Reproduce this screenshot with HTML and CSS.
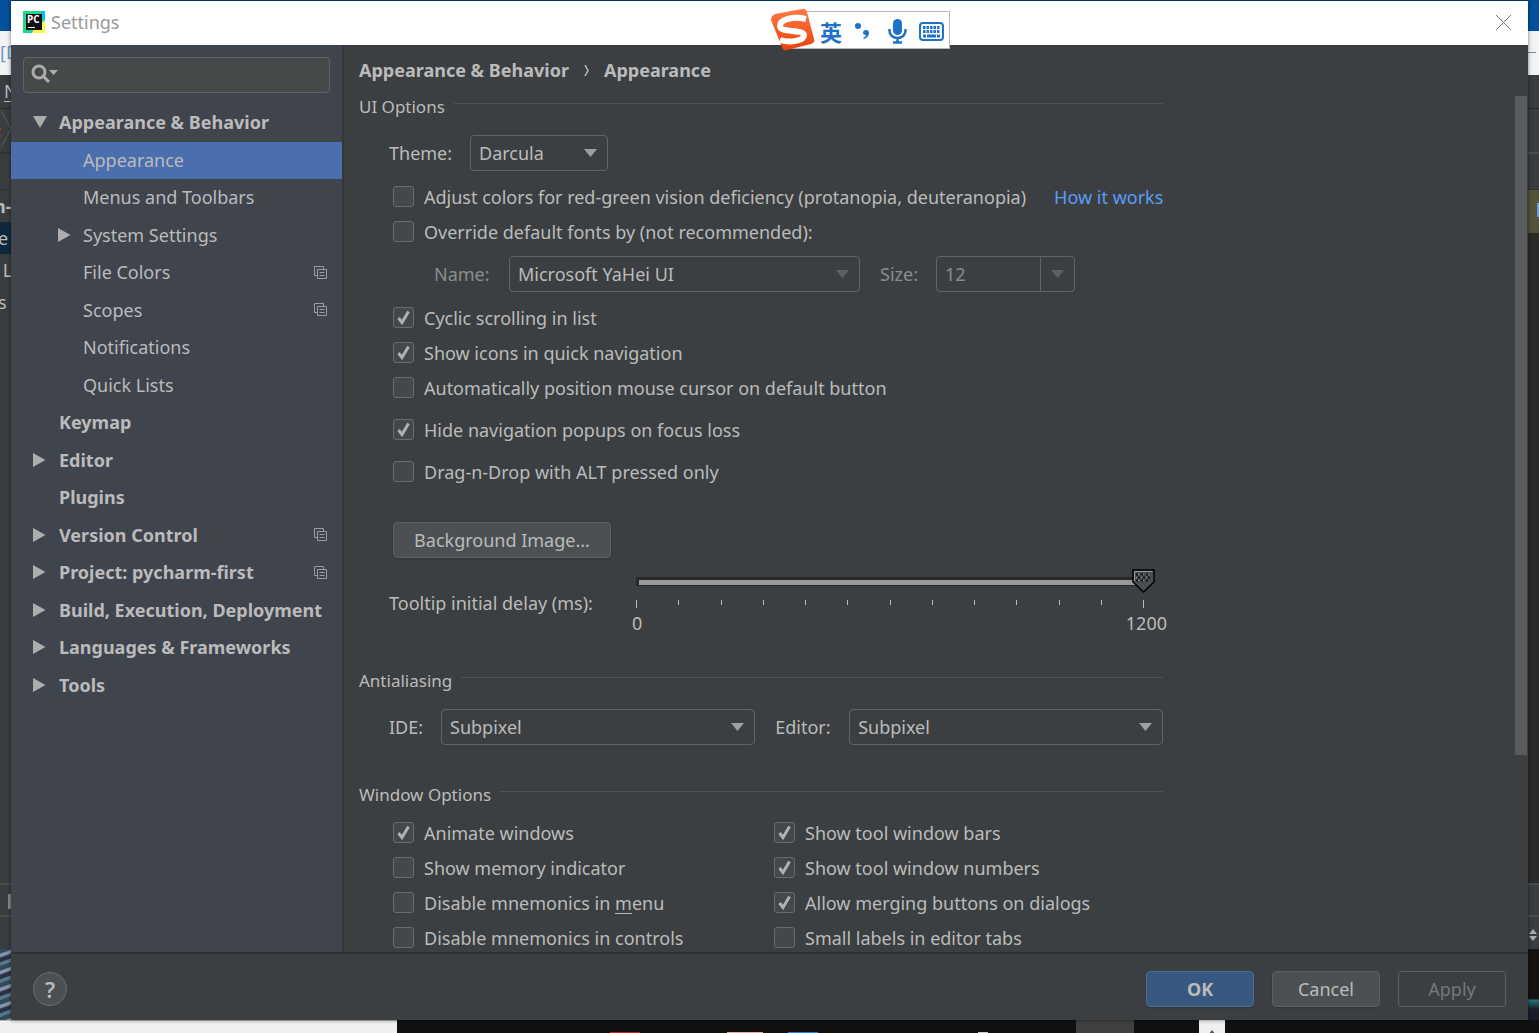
FILE: index.html
```html
<!DOCTYPE html>
<html lang="en">
<head>
<meta charset="utf-8">
<title>Settings</title>
<link rel="stylesheet" href="styles.css">
</head>
<body>
<svg width="0" height="0" class="defs" aria-hidden="true">
  <symbol id="copy" viewBox="0 0 13 13"><path d="M3 9.500H.5V.5h9V3M3.500 3.500h9v9h-9zM5.500 6.500h5M5.500 9.500h5" fill="none" stroke="#9a9ca1"/></symbol>
  <symbol id="right" viewBox="0 0 13 14"><path d="M0 0 12.500 7 0 14z" fill="#adadad"/></symbol>
  <symbol id="down" viewBox="0 0 14 12"><path d="M0 0h14L7 12z" fill="#adadad"/></symbol>
</svg>

<div class="desktop" aria-hidden="true">
  <div class="strip">
    <div class="sky"></div>
    <div class="caption"><span class="blue">[D</span></div>
    <div class="menu"><u>N</u></div>
    <div class="crumb"><svg width="11" height="44" viewBox="0 0 11 44"><path d="M1 2 11 20 1 38" fill="none" stroke="#5a5d5f"/><path d="M0 20h1M0 27h1" stroke="#a33" stroke-width="2"/></svg></div>
    <div class="tools"></div>
    <div class="tree-back"><b>n-</b><span class="picked">e</span><span>&nbsp;L</span><span>s</span></div>
    <div class="tab"><i></i></div>
    <div class="status"></div>
    <div class="photo"></div>
  </div>
  <div class="strip right">
    <div class="sky"></div>
    <div class="caption"><i></i></div>
    <div class="menu"></div>
    <div class="crumb"></div>
    <div class="tools"></div>
    <div class="note"><i></i></div>
    <div class="editor"></div>
    <div class="tab"></div>
    <div class="status"><svg width="9" height="12" viewBox="0 0 9 12"><path d="M0 5l4-5 4 5zM0 7h8l-4 5z" fill="#aaa"/></svg></div>
    <div class="photo dark"></div>
  </div>
  <div class="taskbar"><div class="light"></div><div class="icons"><i class="red"></i><i class="pink"></i><i class="azure"></i><i class="white"></i></div><div class="active"></div><div class="gap"></div><div class="tray"><svg width="8" height="5" viewBox="0 0 8 5"><path d="M4 0 8 5H0z" fill="#555"/></svg></div></div>
</div>

<div class="dialog" role="dialog" aria-labelledby="title">
  <header class="titlebar">
    <svg width="22" height="22" viewBox="0 0 22 22" aria-hidden="true"><path fill="#21d789" d="M0 0h22v22H0z"/><path fill="#07c3f2" d="M18 0h4v12l-4-2z"/><path fill="#fcf84a" d="m18 12 4-3v13H9l3-6z"/><path fill="#111" d="M3 3h16v16H3z"/><path fill="#fff" d="M5 16h7v1H5z"/><text x="4" y="12" class="logo">PC</text></svg>
    <h1 id="title">Settings</h1>
    <button class="close" type="button" aria-label="Close"><svg width="15" height="15" viewBox="0 0 15 15"><path d="m0 0 15 15M15 0 0 15" stroke="#777" fill="none"/></svg></button>
  </header>

  <div class="body">
    <aside class="sidebar">
      <label class="search"><svg width="27" height="19" viewBox="0 0 27 19" aria-hidden="true"><circle cx="8" cy="8" r="6" fill="none" stroke="#adadad" stroke-width="3"/><path d="m12 12 6 6" stroke="#adadad" stroke-width="3"/><path d="M18 6h9l-4.500 5z" fill="#adadad"/></svg><input type="search" aria-label="Search settings"></label>
      <nav class="tree">
        <a href="#" class="top"><svg width="14" height="12"><use href="#down"/></svg><span>Appearance &amp; Behavior</span></a>
        <a href="#" class="sub selected"><span>Appearance</span></a>
        <a href="#" class="sub"><span>Menus and Toolbars</span></a>
        <a href="#" class="sub"><svg width="13" height="14"><use href="#right"/></svg><span>System Settings</span></a>
        <a href="#" class="sub"><span>File Colors</span><svg class="copy"><use href="#copy"/></svg></a>
        <a href="#" class="sub"><span>Scopes</span><svg class="copy"><use href="#copy"/></svg></a>
        <a href="#" class="sub"><span>Notifications</span></a>
        <a href="#" class="sub"><span>Quick Lists</span></a>
        <a href="#" class="top"><span>Keymap</span></a>
        <a href="#" class="top"><svg width="13" height="14"><use href="#right"/></svg><span>Editor</span></a>
        <a href="#" class="top"><span>Plugins</span></a>
        <a href="#" class="top"><svg width="13" height="14"><use href="#right"/></svg><span>Version Control</span><svg class="copy"><use href="#copy"/></svg></a>
        <a href="#" class="top"><svg width="13" height="14"><use href="#right"/></svg><span>Project: pycharm-first</span><svg class="copy"><use href="#copy"/></svg></a>
        <a href="#" class="top"><svg width="13" height="14"><use href="#right"/></svg><span>Build, Execution, Deployment</span></a>
        <a href="#" class="top"><svg width="13" height="14"><use href="#right"/></svg><span>Languages &amp; Frameworks</span></a>
        <a href="#" class="top"><svg width="13" height="14"><use href="#right"/></svg><span>Tools</span></a>
      </nav>
    </aside>

    <main class="main">
      <div class="crumbs"><b>Appearance &amp; Behavior</b><svg width="5" height="11" viewBox="0 0 5 11" aria-hidden="true"><path d="m1 0 3 5.500L1 11" fill="none" stroke="#bbb" stroke-width="1.500"/></svg><b>Appearance</b></div>
      <div class="scroller">
        <form class="form">
          <h2>UI Options</h2>
          <div class="theme"><label for="theme">Theme:</label><select id="theme"><option>Darcula</option></select></div>
          <div class="checks">
            <div class="with-link"><label class="check"><input type="checkbox">Adjust colors for red-green vision deficiency (protanopia, deuteranopia)</label><a href="#">How it works</a></div>
            <label class="check"><input type="checkbox">Override default fonts by (not recommended):</label>
          </div>
          <div class="font-row">
            <label for="name">Name:</label><select id="name" disabled><option>Microsoft YaHei UI</option></select>
            <label for="size">Size:</label><div class="combo"><input id="size" type="text" value="12" disabled><button type="button" disabled aria-label="Choose size"><svg width="13" height="8" viewBox="0 0 13 8"><path d="M0 0h13L6.500 8z" fill="#5e6061"/></svg></button></div>
          </div>
          <div class="checks">
            <label class="check"><input type="checkbox" checked>Cyclic scrolling in list</label>
            <label class="check"><input type="checkbox" checked>Show icons in quick navigation</label>
            <label class="check"><input type="checkbox">Automatically position mouse cursor on default button</label>
            <label class="check spaced"><input type="checkbox" checked>Hide navigation popups on focus loss</label>
            <label class="check spaced"><input type="checkbox">Drag-n-Drop with ALT pressed only</label>
          </div>
          <button class="btn background" type="button">Background Image...</button>
          <div class="delay">
            <label for="delay">Tooltip initial delay (ms):</label>
            <div class="slider">
              <input id="delay" type="range" min="0" max="1200" value="1200">
              <div class="ticks"><i></i><i></i><i></i><i></i><i></i><i></i><i></i><i></i><i></i><i></i><i></i><i></i><i></i></div>
              <div class="scale"><span>0</span><span>1200</span></div>
            </div>
          </div>

          <h2 class="aa">Antialiasing</h2>
          <div class="aa-row"><label for="ide">IDE:</label><select id="ide"><option>Subpixel</option></select><label for="editor" class="second">Editor:</label><select id="editor"><option>Subpixel</option></select></div>

          <h2 class="win">Window Options</h2>
          <div class="checks two">
            <label class="check"><input type="checkbox" checked>Animate windows</label>
            <label class="check"><input type="checkbox" checked>Show tool window bars</label>
            <label class="check"><input type="checkbox">Show memory indicator</label>
            <label class="check"><input type="checkbox" checked>Show tool window numbers</label>
            <label class="check"><input type="checkbox"><span>Disable mnemonics in <u>m</u>enu</span></label>
            <label class="check"><input type="checkbox" checked>Allow merging buttons on dialogs</label>
            <label class="check"><input type="checkbox">Disable mnemonics in controls</label>
            <label class="check"><input type="checkbox">Small labels in editor tabs</label>
          </div>
        </form>
        <div class="rail"><div class="thumb"></div></div>
      </div>
    </main>
  </div>

  <footer class="footer">
    <button class="help" type="button" aria-label="Help">?</button>
    <button class="btn primary" type="button">OK</button>
    <button class="btn" type="button">Cancel</button>
    <button class="btn" type="button" disabled>Apply</button>
  </footer>
</div>

<div class="ime" aria-label="Input method">
  <svg class="sogou" width="46" height="44" viewBox="0 0 46 44" aria-hidden="true"><defs><linearGradient id="o" x2="0" y2="1"><stop stop-color="#ff7a45"/><stop offset="1" stop-color="#e8420c"/></linearGradient></defs><path d="M5 6 32 1q4-1 5 3l7 27q1 4-3 5l-24 6q-4 1-5-3L1 12q0-4 4-6z" fill="url(#o)"/><path d="M36 11C24 8 10 11 10 18c0 7 23 3 24 9 0 6-14 8-24 5" fill="none" stroke="#fff" stroke-width="6"/></svg>
  <b>英</b>
  <svg width="22" height="20" viewBox="0 0 22 20" aria-hidden="true"><circle cx="4" cy="5" r="3" fill="#1e73c8"/><path d="M9 12a3 3 0 1 1 6 0c0 3-2 5-5 6l-1-1c2-1 3-2 3-3-2 0-3-1-3-2z" fill="#1e73c8"/></svg>
  <svg width="19" height="26" viewBox="0 0 19 26" aria-hidden="true"><rect x="5" y="1" width="9" height="16" rx="4.500" fill="#1e73c8"/><path d="M1.500 11v2a8 7 0 0 0 16 0v-2M9.500 20v4M5 24.500h9" fill="none" stroke="#1e73c8" stroke-width="2.500"/></svg>
  <svg width="25" height="19" viewBox="0 0 25 19" aria-hidden="true"><rect x="1" y="1" width="23" height="17" rx="3" fill="#fff" stroke="#1e73c8" stroke-width="2"/><path d="M4 5.500h17M4 9.500h17" stroke="#1e73c8" stroke-width="3" stroke-dasharray="2.500 1"/><path d="M4 14h3m1 0h9m1 0h3" stroke="#1e73c8" stroke-width="3"/></svg>
</div>
</body>
</html>
```
FILE: styles.css
```css
* { box-sizing: border-box; }
body {
  margin: 0;
  height: 100vh;
  min-height: 640px;
  padding: 1px 11px 13px;
  position: relative;
  overflow: hidden;
  font: 18px/24px "Noto Sans", "Open Sans", "Noto Sans CJK SC", sans-serif;
  color: #bbb;
}
button, input, select { font: inherit; color: inherit; margin: 0; }
button { padding: 0; }
a { color: inherit; text-decoration: none; }
h1, h2 { margin: 0; font-weight: 400; }
h1 { font-size: 18px; }
svg { flex: none; }
.defs { position: absolute; }

/* Desktop behind the dialog */
.desktop {
  position: absolute;
  inset: 0;
  z-index: -1;
  display: grid;
  grid-template: 1fr 13px / 11px 1fr 11px;
  background: #04407c;
}
.strip { display: flex; flex-direction: column; overflow: hidden; background: #3a3d3f; min-height: 0; }
.right { grid-column: 3; }
.strip > div { flex: none; overflow: hidden; }
.sky { height: 31px; background: #04509a; }
.strip .caption { height: 44px; background: #f2f3f4; padding-top: 9px; }
.caption i { display: block; width: 8px; height: 1px; margin-top: 12px; background: #888; }
.blue { color: #6b9bc9; }
.menu { height: 34px; padding: 4px 0 0 4px; border-bottom: 1px solid #2b2b2b; }
.crumb { height: 45px; border-bottom: 2px solid #2f3132; }
.right .crumb { border-color: #4c4e50; }
.tools { height: 36px; border-bottom: 1px solid #2f3132; }
.strip .tree-back, .strip .editor { flex: 1; line-height: 32px; }
.tree-back > * { display: block; height: 32px; white-space: nowrap; margin-left: -2px; }
.tree-back > b { margin-left: -6px; }
.tree-back .picked { background: #0d293e; }
.editor { background: #2b2b2b; }
.note { height: 43px; background: #55543a; padding: 13px 0 0 9px; }
.note i { display: block; height: 14px; background: #589df6; }
.tab { height: 34px; border-top: 2px solid #4b4b4b; border-bottom: 2px solid #4b4b4b; padding: 9px 0 0 8px; }
.tab i { display: block; height: 15px; background: #888; }
.status { height: 32px; padding: 12px 0 0 1px; line-height: 0; }
.photo { height: 71px; background: repeating-linear-gradient(160deg, #334a5c 0 4px, #8798a8 5px 7px, #293345 9px 12px, #57788a 13px 16px); }
.dark { background: linear-gradient(#151210 0 70%, #28727b 72%, #171d29 85%); }
.taskbar { grid-row: 2; grid-column: 1 / -1; display: flex; background: #0f1011; }
.light { width: 397px; background: #f0f0f0; border-top: 1px solid #bbb; }
.icons { flex: 1; display: flex; align-items: flex-end; padding-left: 213px; }
.icons i { width: 30px; height: 1px; }
.icons .red { background: #e21b12; }
.icons .pink { width: 36px; margin-left: 87px; background: #f5a49c; }
.icons .azure { margin-left: 25px; background: #1d83e8; }
.icons .white { width: 10px; margin-left: 160px; background: #ccc; }
.active { width: 58px; background: #414141; }
.gap { width: 65px; }
.tray { width: 26px; margin-right: 314px; background: #f0f0f0; padding: 8px 0 0 9px; line-height: 0; }

/* Dialog frame */
.dialog { height: 100%; display: flex; flex-direction: column; background: #3c3f41; box-shadow: 0 0 4px #0008; }
.titlebar { height: 44px; flex: none; display: flex; align-items: center; gap: 6px; padding: 0 17px 2px 12px; background: #fff; color: #999; }
.logo { font: bold 10px "Open Sans", sans-serif; fill: #fff; }
.close { display: flex; margin-left: auto; border: 0; background: none; }
.body { flex: 1; min-height: 0; display: flex; }

/* Sidebar */
.sidebar { width: 333px; flex: none; padding-top: 12px; background: #40444d; border-right: 2px solid #353638; overflow: hidden; }
.search { display: flex; align-items: center; height: 36px; margin: 0 12px; padding: 0 7px 4px; border: 1px solid #646464; border-radius: 4px; background: #45494a; }
.search input { flex: 1; min-width: 0; border: 0; outline: 0; background: none; }
.tree { display: grid; grid-auto-rows: 1fr; height: 600px; margin-top: 11px; }
.tree a { display: flex; align-items: center; position: relative; padding-right: 15px; padding-bottom: 1px; white-space: nowrap; }
.tree .top { font-weight: 700; padding-left: 48px; }
.tree .sub { padding-left: 72px; }
.tree a > svg:first-child { position: absolute; left: 22px; }
.tree .sub > svg:first-child { left: 47px; }
.copy { width: 13px; height: 13px; margin-left: auto; }
.selected { background: #4b6eaf; }

/* Settings page */
.main { flex: 1; min-width: 0; display: flex; flex-direction: column; }
.crumbs { height: 50px; flex: none; display: flex; align-items: center; gap: 15px; padding-left: 15px; }
.crumbs b { font-weight: 700; }
.scroller { flex: 1; min-height: 0; display: flex; justify-content: space-between; overflow: hidden; padding-left: 15px; }
.form { flex: 0 1 803px; white-space: nowrap; }
.rail { width: 13px; padding: 1px 1px 0 0; }
.thumb { height: 77%; background: #595b5d; }
h2 { display: flex; gap: 9px; font-size: 17px; }
h2::after { content: ""; flex: 1; height: 1px; margin-top: 8px; background: #515253; }
select {
  appearance: none;
  height: 36px;
  padding: 0 8px;
  border: 1px solid #646464;
  border-radius: 4px;
  background: #3c3f41 url("data:image/svg+xml,%3Csvg xmlns='http://www.w3.org/2000/svg' width='13' height='8'%3E%3Cpath d='M0 0h13L6.500 8z' fill='%239da0a3'/%3E%3C/svg%3E") no-repeat right 10px center;
}
select:disabled { opacity: 1; color: #bbb; background-image: url("data:image/svg+xml,%3Csvg xmlns='http://www.w3.org/2000/svg' width='13' height='8'%3E%3Cpath d='M0 0h13L6.500 8z' fill='%235e6061'/%3E%3C/svg%3E"); }
.theme { display: grid; grid-template-columns: 81px 138px; align-items: center; margin: 16px 0 8px 30px; }
.checks { padding-left: 34px; }
.check { display: flex; align-items: center; gap: 10px; height: 35px; }
.check input {
  appearance: none;
  flex: none;
  width: 21px;
  height: 21px;
  border: 1px solid #6b6b6b;
  border-radius: 3px;
  background: #43494a;
}
.check input:checked { background: #43494a url("data:image/svg+xml,%3Csvg xmlns='http://www.w3.org/2000/svg' width='13' height='15'%3E%3Cpath d='M1.500 8 5 12.500 11.500 1.500' fill='none' stroke='%23b0b0b0' stroke-width='3'/%3E%3C/svg%3E") no-repeat center; }
.spaced { margin-top: 7px; }
.with-link { display: flex; align-items: center; gap: 28px; }
.with-link a { color: #589df6; }
.font-row { display: grid; grid-template-columns: 75px 351px 76px 139px; align-items: center; margin: 7px 0 8px 75px; color: #8c8c8c; }
.font-row label:nth-of-type(2) { padding-left: 20px; }
.combo { display: flex; height: 36px; border: 1px solid #646464; border-radius: 4px; }
.combo input { flex: 1; min-width: 0; padding: 0 8px; border: 0; background: none; }
.combo button { display: grid; place-items: center; width: 34px; border: 0; border-left: 1px solid #646464; background: none; }
.btn { height: 36px; width: 108px; border: 1px solid #5e6060; border-radius: 4px; background: #4c5052; box-shadow: 0 1px 2px #0003; }
.btn:disabled { background: none; color: #777; box-shadow: none; }
.background { display: block; width: 218px; margin: 33px 0 11px 34px; }
.delay { display: grid; grid-template-columns: 247px 519px; align-items: center; margin-left: 30px; }
.slider input {
  appearance: none;
  display: block;
  width: 100%;
  height: 24px;
  background: linear-gradient(#999, #999) no-repeat 3px 11px / 500px 5px, linear-gradient(#26282a, #26282a) no-repeat 0 8px / 507px 9px;
}
.slider input::-webkit-slider-thumb {
  appearance: none;
  width: 23px;
  height: 24px;
  background: url("data:image/svg+xml,%3Csvg xmlns='http://www.w3.org/2000/svg' width='23' height='24'%3E%3Cpath d='M1 1h21v12L11.500 23 1 13z' fill='%234b4e50' stroke='%23000' stroke-width='1.500'/%3E%3Cpath d='M2.500 12V2.500h18' fill='none' stroke='%23999'/%3E%3Cpath d='M4 5.500h15M6 8.500h13M4 11.500h15' stroke='%23111' stroke-width='2' stroke-dasharray='2 3'/%3E%3Cpath d='M6 5.500h13M4 8.500h15M6 11.500h7' stroke='%23999' stroke-dasharray='1 4'/%3E%3C/svg%3E");
}
.ticks { display: flex; justify-content: space-between; width: 508px; height: 11px; padding-top: 7px; }
.ticks i { width: 1px; height: 5px; background: #bbb; }
.ticks i:first-child, .ticks i:last-child { height: 8px; }
.scale { display: flex; justify-content: space-between; height: 32px; padding-top: 7px; margin: 0 -12px 0 -4px; }
.aa { margin-top: 33px; }
.aa-row { display: grid; grid-template-columns: 52px 1fr 94px 1fr; align-items: center; margin: 16px 0 38px 30px; }
.second { padding-left: 20px; }
.two { display: grid; grid-template-columns: 381px 1fr; margin-top: 8px; }
u { text-underline-offset: 3px; }

.footer { height: 68px; flex: none; display: flex; align-items: center; gap: 18px; padding: 4px 22px 0; border-top: 2px solid #323232; }
.help { width: 34px; height: 34px; margin-right: auto; border: 1px solid #6a6d6f; border-radius: 50%; background: #4c5052; font-size: 22px; font-weight: 600; }
.primary { background: #365880; border-color: #4c708c; font-weight: 700; }

/* Floating input-method bar */
.ime { position: absolute; top: 11px; left: 790px; width: 160px; height: 38px; display: flex; align-items: center; gap: 12px; padding: 2px 5px 0 29px; background: #fff; border: 1px solid #b5b7b9; color: #1e73c8; }
.ime b { font: 700 22px/24px "Noto Sans CJK SC", sans-serif; }
.sogou { position: absolute; top: -4px; left: -21px; }
```
